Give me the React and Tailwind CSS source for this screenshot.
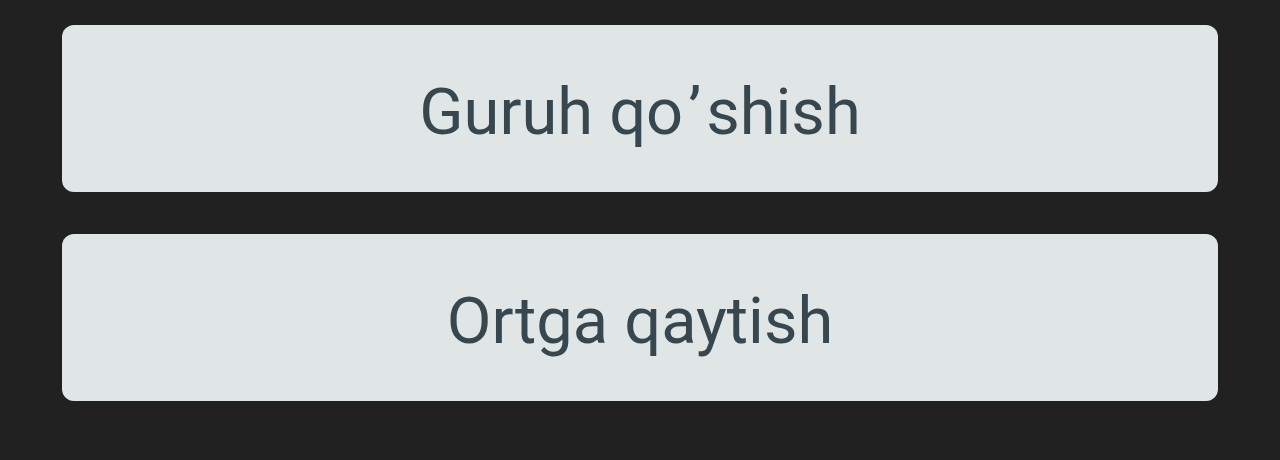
export default function App() {
  const items = [
    <>
      Guruh qo<span className="mx-[5px]">’</span>shish
    </>,
    "Ortga qaytish",
  ];

  return (
    <div
      className="w-[1280px] h-[460px] bg-[#212121] px-[62px] pt-[25px] flex flex-col gap-[42px]"
      style={{ fontFamily: "Roboto, 'Noto Sans', sans-serif" }}
    >
      {items.map((label, i) => (
        <button
          key={i}
          className="h-[167px] w-full rounded-[12px] bg-[#e0e6e6] text-[#37474f] text-[65px] pt-[8px] flex items-center justify-center"
        >
          {label}
        </button>
      ))}
    </div>
  );
}
